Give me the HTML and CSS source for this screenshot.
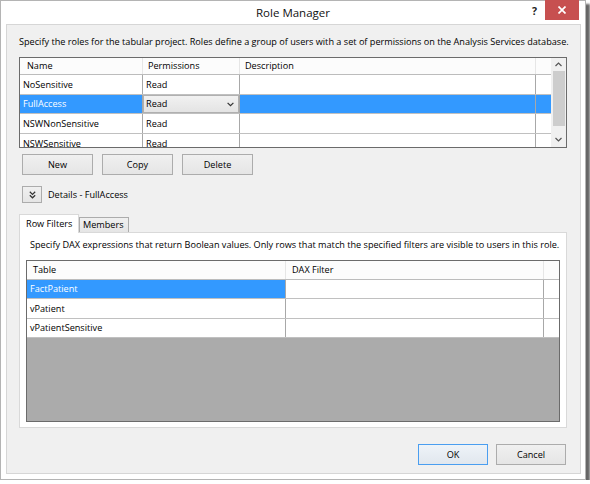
FILE: index.html
```html
<!DOCTYPE html>
<html>
<head>
<meta charset="utf-8">
<title>Role Manager</title>
<link rel="stylesheet" href="styles.css">
</head>
<body>
<div class="window">
  <div class="titlebar">
    <div></div>
    <div class="title">Role Manager</div>
    <div class="caption">
      <span class="help">?</span>
      <span class="close"><svg width="8" height="8" viewBox="0 0 8 8"><path d="M0.5 0.5 L7.5 7.5 M7.5 0.5 L0.5 7.5" stroke="#fff" stroke-width="1.7" fill="none"/></svg></span>
    </div>
  </div>
  <div class="client">
    <p class="intro">Specify the roles for the tabular project. Roles define a group of users with a set of permissions on the Analysis Services database.</p>

    <div class="grid roles">
      <div class="grid-main">
        <div class="row head"><div class="c">Name</div><div class="c">Permissions</div><div class="c">Description</div><div class="c"></div></div>
        <div class="row"><div class="c">NoSensitive</div><div class="c">Read</div><div class="c"></div><div class="c"></div></div>
        <div class="row sel"><div class="c">FullAccess</div><div class="c combo"><span>Read</span><svg width="7" height="5" viewBox="0 0 7 5"><polyline points="0.6,0.8 3.5,3.7 6.4,0.8" stroke="#333" stroke-width="1.2" fill="none"/></svg></div><div class="c"></div><div class="c"></div></div>
        <div class="row"><div class="c">NSWNonSensitive</div><div class="c">Read</div><div class="c"></div><div class="c"></div></div>
        <div class="row"><div class="c">NSWSensitive</div><div class="c">Read</div><div class="c"></div><div class="c"></div></div>
      </div>
      <div class="scrollbar">
        <div class="sb-arrow"><svg width="7" height="5" viewBox="0 0 7 5"><polyline points="0.5,4 3.5,1 6.5,4" stroke="#555" stroke-width="1.2" fill="none"/></svg></div>
        <div class="sb-thumb"></div>
        <div class="sb-arrow sb-down"><svg width="7" height="5" viewBox="0 0 7 5"><polyline points="0.5,1 3.5,4 6.5,1" stroke="#555" stroke-width="1.2" fill="none"/></svg></div>
      </div>
    </div>

    <div class="btnrow">
      <div class="btn">New</div>
      <div class="btn">Copy</div>
      <div class="btn">Delete</div>
    </div>

    <div class="details">
      <div class="dbtn"><svg width="7" height="8" viewBox="0 0 7 8"><polyline points="0.8,0.8 3.5,3.4 6.2,0.8" stroke="#333" stroke-width="1.2" fill="none"/><polyline points="0.8,4.2 3.5,6.8 6.2,4.2" stroke="#333" stroke-width="1.2" fill="none"/></svg></div>
      <span>Details - FullAccess</span>
    </div>

    <div class="tabs">
      <div class="tab active">Row Filters</div>
      <div class="tab">Members</div>
    </div>
    <div class="panel">
      <p>Specify DAX expressions that return Boolean values. Only rows that match the specified filters are visible to users in this role.</p>
      <div class="grid filters">
        <div class="row head"><div class="c">Table</div><div class="c">DAX Filter</div><div class="c"></div></div>
        <div class="row"><div class="c sel">FactPatient</div><div class="c"></div><div class="c"></div></div>
        <div class="row"><div class="c">vPatient</div><div class="c"></div><div class="c"></div></div>
        <div class="row"><div class="c">vPatientSensitive</div><div class="c"></div><div class="c"></div></div>
        <div class="empty"></div>
      </div>
    </div>

    <div class="footer">
      <div class="btn wide default">OK</div>
      <div class="btn wide">Cancel</div>
    </div>
  </div>
</div>
</body>
</html>
```

FILE: styles.css
```css
body {
  margin: 0;
  background: #fff;
  font-family: "Open Sans", "Noto Sans", sans-serif;
  font-size: 9.15px;
  color: #000;
}

.window {
  width: 586px;
  height: 480px;
  box-sizing: border-box;
  border: 1px solid #b4b4b4;
  background: #fff;
  box-shadow: 4px 4px 2px rgba(0, 0, 0, 0.6);
  display: flex;
  flex-direction: column;
}

.titlebar {
  height: 23px;
  flex: 0 0 23px;
  display: grid;
  grid-template-columns: 1fr auto 1fr;
  align-items: start;
}

.title {
  font-size: 11.5px;
  line-height: 23px;
  color: #111;
}

.caption {
  justify-self: end;
  display: flex;
  align-items: flex-start;
}

.help {
  font-weight: bold;
  font-size: 10.5px;
  line-height: 20px;
  margin-right: 8px;
  color: #222;
}

.close {
  width: 34px;
  height: 20px;
  margin-top: -1px;
  margin-right: 6px;
  background: #c75050;
  display: flex;
  align-items: center;
  justify-content: center;
}

.client {
  flex: 1;
  margin: 0 4px 5px 5px;
  border: 1px solid #d6d6d6;
  background: #f0f0f0;
  padding: 10px 13px 0 12px;
  display: flex;
  flex-direction: column;
}

.intro {
  margin: 0;
  line-height: 14px;
  white-space: nowrap;
}

/* grids */
.grid {
  box-sizing: border-box;
  border: 1px solid #6b6b6b;
  background: #fff;
}

.row {
  display: grid;
  column-gap: 1px;
  background: #a8a8a8;
  border-bottom: 1px solid #c0c0c0;
  height: 19px;
}

.row .c {
  background: #fff;
  line-height: 19px;
  padding-left: 3px;
  white-space: nowrap;
  overflow: hidden;
}

.row.head {
  height: 16px;
  background: #e6e6e6;
  border-bottom: 1px solid #bcbcbc;
}

.row.head .c {
  background: #fcfcfc;
  line-height: 16px;
  padding-left: 5px;
}

.roles {
  margin-top: 8px;
  height: 91px;
  display: flex;
}

.grid-main {
  flex: 1;
  overflow: hidden;
}

.roles .row {
  grid-template-columns: 122px 96px 295px 15px;
}

.roles .row.head .c:first-child {
  padding-left: 7px;
}

.roles .row:nth-child(3) {
  height: 18px;
}

.roles .row:nth-child(3) .c {
  line-height: 18px;
}

.row.sel .c {
  background: #3399ff;
  color: #fff;
}

.row.sel .c.combo {
  background: linear-gradient(#f2f2f2, #e3e3e3);
  color: #000;
  box-shadow: inset 0 0 0 1px #b0b0b0;
  display: flex;
  align-items: center;
  justify-content: space-between;
  padding: 0 5px 0 3px;
}

.scrollbar {
  width: 15px;
  flex: 0 0 15px;
  background: #f0f0f0;
  display: flex;
  flex-direction: column;
}

.sb-arrow {
  height: 13px;
  display: flex;
  align-items: center;
  justify-content: center;
}

.sb-thumb {
  height: 55px;
  margin: 0 1px 0 2px;
  background: #cdcdcd;
}

.sb-down {
  flex: 1;
  align-items: flex-end;
  padding-bottom: 5px;
}

/* buttons */
.btnrow {
  display: flex;
  gap: 9px;
  margin-top: 6px;
  padding-left: 3px;
}

.btn {
  width: 71px;
  height: 21px;
  box-sizing: border-box;
  border: 1px solid #acacac;
  background: linear-gradient(#f0f0f0, #e5e5e5);
  display: flex;
  align-items: center;
  justify-content: center;
}

.btn.wide {
  width: 70px;
}

.btn.default {
  border-color: #4a9ef0;
  background: linear-gradient(#eef3f8, #e1e7ee);
}

.details {
  display: flex;
  align-items: center;
  gap: 6px;
  margin-top: 11px;
  padding-left: 3px;
  height: 17px;
}

.dbtn {
  width: 20px;
  height: 17px;
  box-sizing: border-box;
  border: 1px solid #acacac;
  background: linear-gradient(#f0f0f0, #e5e5e5);
  display: flex;
  align-items: center;
  justify-content: center;
}

/* tabs */
.tabs {
  display: flex;
  align-items: flex-end;
  margin-top: 11px;
  margin-bottom: -1px;
  position: relative;
  z-index: 1;
  height: 19px;
}

.tab {
  box-sizing: border-box;
  height: 15px;
  margin-bottom: 1px;
  border: 1px solid #acacac;
  border-bottom: none;
  background: linear-gradient(#f0f0f0, #e5e5e5);
  padding: 0 4px 0 3px;
  line-height: 14px;
}

.tab.active {
  height: 19px;
  margin-bottom: 0;
  width: 60px;
  border-color: #d9d9d9;
  background: #fff;
  padding-left: 6px;
  line-height: 17px;
}

.panel {
  height: 196px;
  box-sizing: border-box;
  border: 1px solid #d9d9d9;
  background: #fff;
  padding: 5px 6px 0 6px;
  display: flex;
  flex-direction: column;
}

.panel p {
  margin: 0;
  line-height: 14px;
  padding-left: 4px;
  white-space: nowrap;
}

.filters {
  margin-top: 8px;
  height: 162px;
  display: flex;
  flex-direction: column;
}

.filters .row {
  grid-template-columns: 258px 257px 15px;
  height: 18px;
}

.filters .row .c {
  line-height: 18px;
}

.filters .row.head .c {
  padding-left: 6px;
}

.filters .row:nth-child(3) {
  height: 19px;
}

.filters .row:nth-child(3) .c {
  line-height: 19px;
}

.filters .row .c.sel {
  background: #3399ff;
  color: #fff;
}

.empty {
  flex: 1;
  background: #ababab;
}

.footer {
  display: flex;
  justify-content: flex-end;
  gap: 8px;
  margin-top: 16px;
  padding-right: 1px;
}
```
